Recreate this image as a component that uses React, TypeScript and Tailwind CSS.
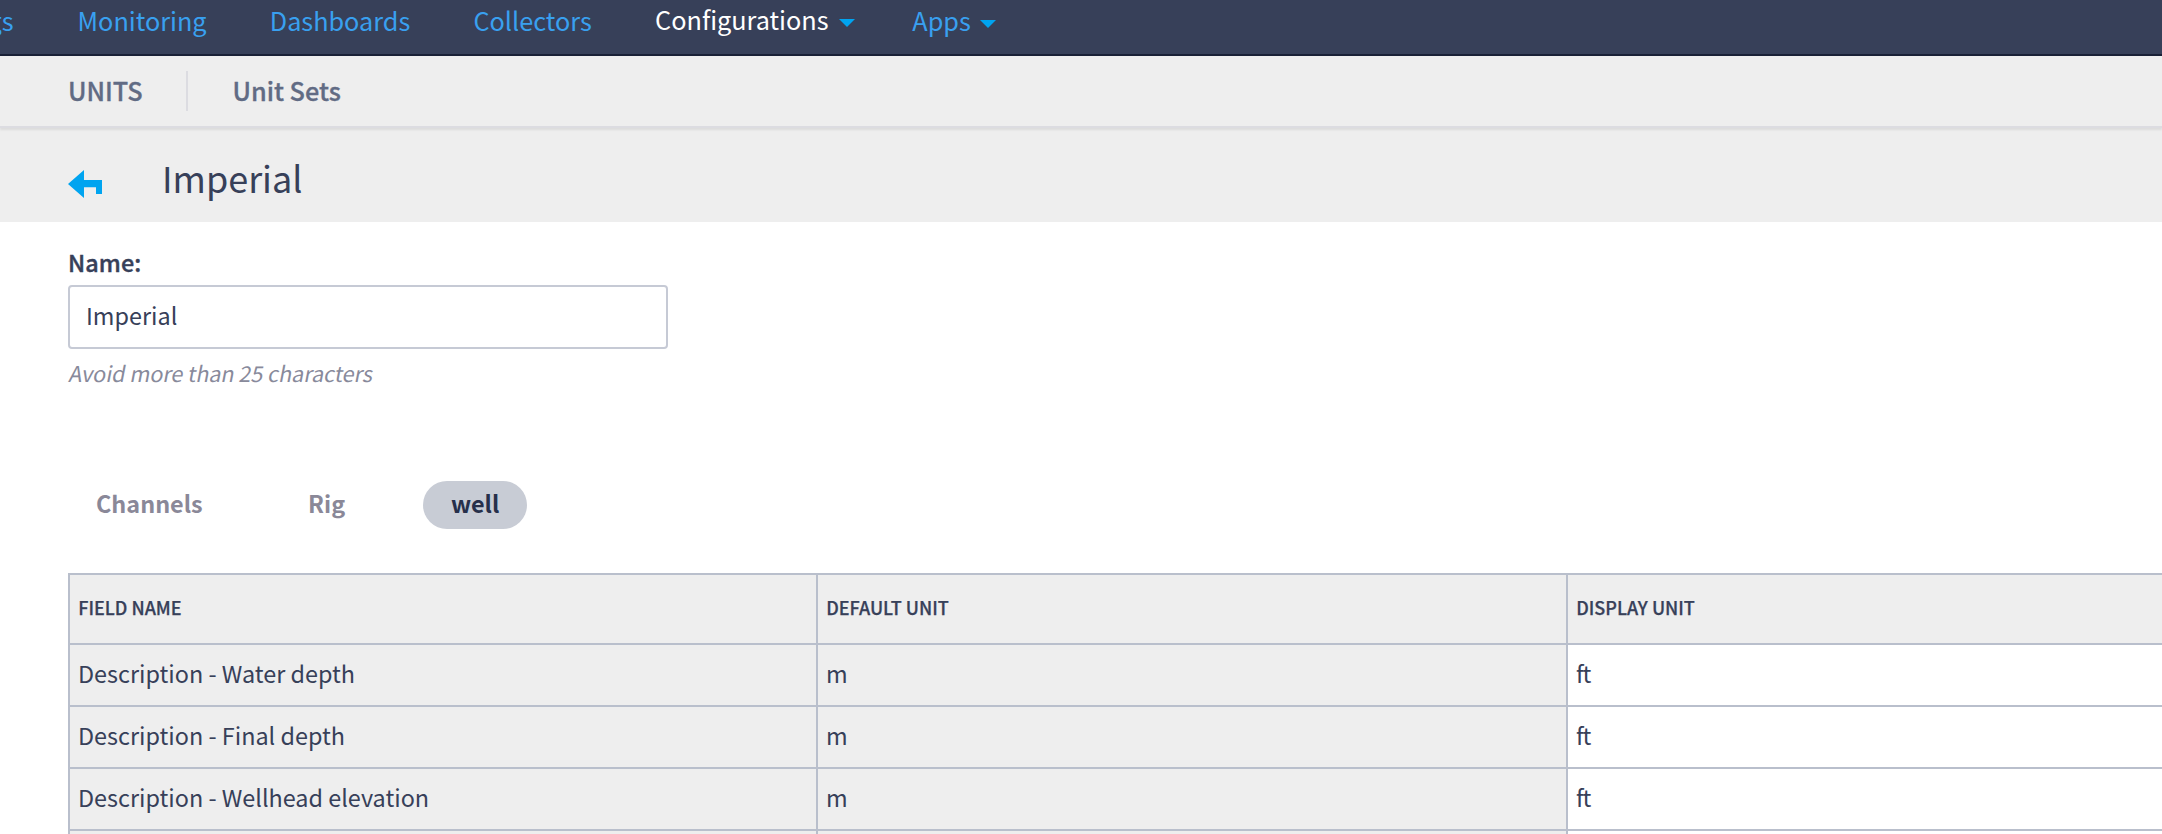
type Row = { field: string; base: string; display: string };

const rows: Row[] = [
  { field: "Description - Water depth", base: "m", display: "ft" },
  { field: "Description - Final depth", base: "m", display: "ft" },
  { field: "Description - Wellhead elevation", base: "m", display: "ft" },
  { field: "", base: "", display: "" },
];

function Caret() {
  return (
    <svg width="16" height="8" viewBox="0 0 16 8" className="shrink-0">
      <path d="M0 0H16L8 8Z" fill="#00a4f0" />
    </svg>
  );
}

function TopNav() {
  return (
    <nav className="h-[56px] border-b-2 border-[#192036] bg-[#374059]">
      <div className="flex h-[40px] items-center whitespace-nowrap text-[25.25px] leading-[40px] text-[#39a0f0]">
        <div className="flex w-[13.6px] justify-end overflow-hidden">
          <a>Rigs</a>
        </div>
        <a className="ml-[64px]">Monitoring</a>
        <a className="ml-[63.2px]">Dashboards</a>
        <a className="ml-[63.2px]">Collectors</a>
        <a className="ml-[63.4px] flex items-center pb-[2px] text-white">
          <span>Configurations</span>
          <span className="ml-[10px] pt-[7px]">
            <Caret />
          </span>
        </a>
        <a className="ml-[57.8px] flex items-center">
          <span>Apps</span>
          <span className="ml-[8.8px] pt-[7px]">
            <Caret />
          </span>
        </a>
      </div>
    </nav>
  );
}

function SubNav() {
  return (
    <div className="relative z-10 flex h-[72px] items-center border-b-2 border-[#dcdce1] bg-[#eeeeee] pl-[68px] text-[25.25px] leading-[40px] font-medium whitespace-nowrap text-[#616b84] shadow-[0_2px_2px_rgba(0,0,0,0.08)] [-webkit-text-stroke:0.3px_#616b84]">
      <span className="w-[118px] pb-[2px]">UNITS</span>
      <span className="h-[40px] w-[2px] bg-[#dcdce1]" />
      <span className="ml-[44.4px] pb-[2px]">Unit Sets</span>
    </div>
  );
}

function TitleBar() {
  return (
    <header className="flex h-[94px] items-center bg-[#eeeeee] pl-[68px]">
      <svg width="34" height="28" viewBox="0 0 34 28" className="mt-[17px]">
        <path d="M0 14L16 0V10H34V24H28V17.3H16V28Z" fill="#00a4f0" />
      </svg>
      <h1 className="ml-[60px] pt-[4px] text-[36px] leading-[44px] font-normal">Imperial</h1>
    </header>
  );
}

function NameField() {
  return (
    <div className="flex flex-col">
      <label className="text-[23.4px] leading-[28px] font-medium tracking-[0.1px] [-webkit-text-stroke:0.4px_#374059]">
        Name:
      </label>
      <div className="mt-[9px] flex h-[64px] w-[600px] items-center rounded-[4px] border-2 border-[#c6cad5] bg-white pb-[2px] pl-[16px] text-[23.4px]">
        Imperial
      </div>
      <p className="mt-[9px] w-fit origin-[0_24px] -skew-x-[11deg] text-[21.7px] leading-[29px] tracking-[-0.08px] text-[#888a9b]">
        Avoid more than 25 characters
      </p>
    </div>
  );
}

function Tabs() {
  return (
    <div className="mt-[94px] flex gap-12 text-[23.4px] leading-[44px] font-bold text-[#8a8898]">
      <span className="h-[48px] w-[163.3px] pl-[28px]">Channels</span>
      <span className="h-[48px] w-[95.7px] pl-[28.8px]">Rig</span>
      <span className="h-[48px] w-[104px] rounded-full bg-[#c8ccd5] pl-[28px] text-[#27304b]">well</span>
    </div>
  );
}

function UnitsTable() {
  const th =
    "h-[70px] border-r-2 border-b-2 border-[#b9bfcc] bg-[#eeeeee] p-0 pb-[4px] pl-[8.2px] text-left align-middle text-[18px] leading-[26px] font-medium [-webkit-text-stroke:0.25px_#374059]";
  const td = "h-[62px] border-r-2 border-b-2 border-[#b9bfcc] p-0 pb-[4px] pl-[8px] align-middle";
  return (
    <table className="mt-[44px] w-[2250px] table-fixed border-separate border-spacing-0 border-t-2 border-l-2 border-[#b9bfcc] text-[23.4px] leading-[34px]">
      <colgroup>
        <col className="w-[748px]" />
        <col className="w-[750px]" />
        <col className="w-[750px]" />
      </colgroup>
      <thead>
        <tr>
          <th className={th}>FIELD NAME</th>
          <th className={th}>DEFAULT UNIT</th>
          <th className={th}>DISPLAY UNIT</th>
        </tr>
      </thead>
      <tbody>
        {rows.map((r, i) => (
          <tr key={i}>
            <td className={td + " bg-[#eeeeee]"}>{r.field}</td>
            <td className={td + " bg-[#eeeeee]"}>{r.base}</td>
            <td className={td + " bg-white tracking-[-1px]"}>{r.display}</td>
          </tr>
        ))}
      </tbody>
    </table>
  );
}

export default function App() {
  return (
    <div className="h-[834px] w-[2162px] overflow-hidden bg-white font-['Noto_Sans_CJK_SC',sans-serif] text-[#374059]">
      <TopNav />
      <SubNav />
      <TitleBar />
      <main className="pt-[26px] pl-[68px]">
        <NameField />
        <Tabs />
        <UnitsTable />
      </main>
    </div>
  );
}
